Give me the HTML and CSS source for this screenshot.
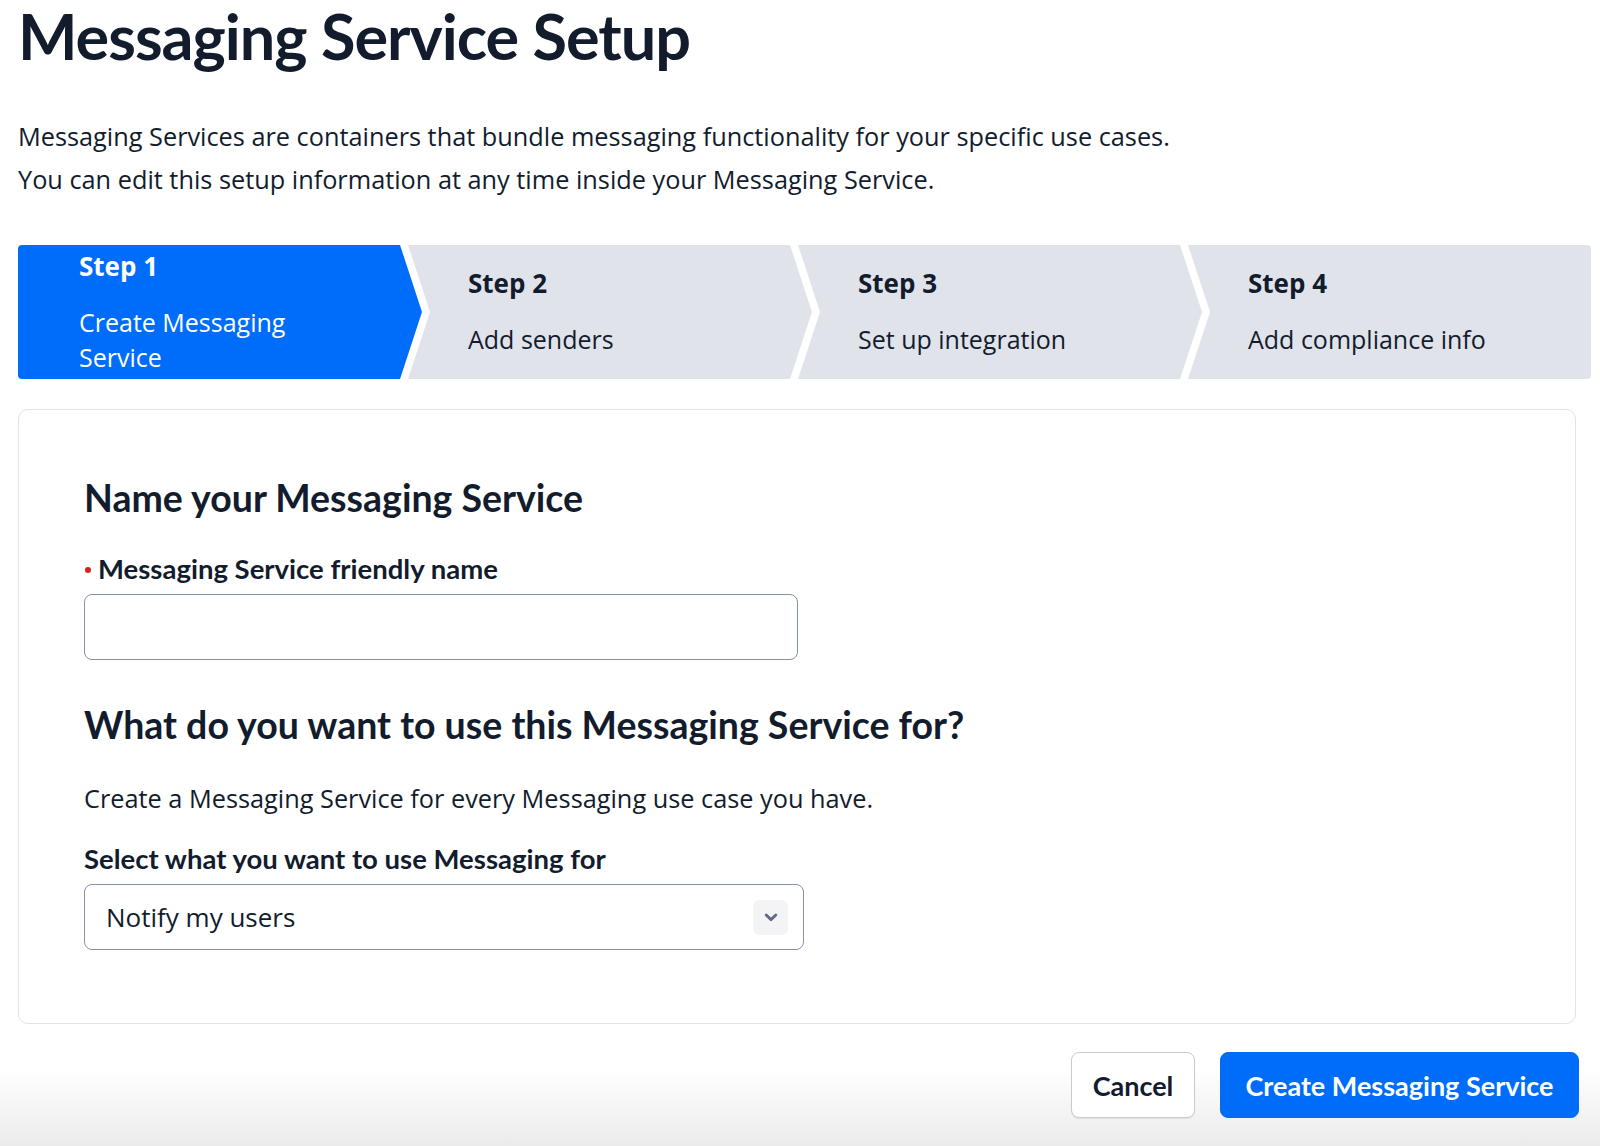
FILE: index.html
```html
<!DOCTYPE html>
<html lang="en">
<head>
<meta charset="utf-8">
<title>Messaging Service Setup</title>
<link rel="stylesheet" href="styles.css">
</head>
<body>
<main class="page">
  <h1 class="page-title">Messaging Service Setup</h1>
  <p class="intro">Messaging Services are containers that bundle messaging functionality for your specific use cases.<br>You can edit this setup information at any time inside your Messaging Service.</p>

  <ol class="stepper">
    <li class="step step-first step-active">
      <span class="step-title">Step 1</span>
      <span class="step-desc">Create Messaging Service</span>
    </li>
    <li class="step">
      <span class="step-title">Step 2</span>
      <span class="step-desc">Add senders</span>
    </li>
    <li class="step">
      <span class="step-title">Step 3</span>
      <span class="step-desc">Set up integration</span>
    </li>
    <li class="step step-last">
      <span class="step-title">Step 4</span>
      <span class="step-desc">Add compliance info</span>
    </li>
  </ol>

  <section class="card">
    <h2 class="card-heading">Name your Messaging Service</h2>
    <label class="field-label" for="friendly-name"><span class="required-dot"></span>Messaging Service friendly name</label>
    <input class="text-input" id="friendly-name" type="text">

    <h2 class="card-heading card-heading-second">What do you want to use this Messaging Service for?</h2>
    <p class="card-desc">Create a Messaging Service for every Messaging use case you have.</p>
    <label class="field-label field-label-select" for="use-case">Select what you want to use Messaging for</label>
    <div class="select" id="use-case">
      <span class="select-value">Notify my users</span>
      <span class="select-chevron">
        <svg width="16" height="16" viewBox="0 0 16 16" aria-hidden="true"><path d="M3.2 6 L8 10.6 L12.8 6" fill="none" stroke="#606b85" stroke-width="2.9" stroke-linecap="round" stroke-linejoin="round"/></svg>
      </span>
    </div>
  </section>

  <div class="actions">
    <button class="btn btn-secondary" type="button">Cancel</button>
    <button class="btn btn-primary" type="button">Create Messaging Service</button>
  </div>
</main>
</body>
</html>
```
FILE: styles.css
```css
html, body {
  margin: 0;
  padding: 0;
}

body {
  height: 1146px;
  overflow: hidden;
  background: linear-gradient(to bottom, #ffffff 0, #ffffff 1068px, #ebebeb 1146px);
  color: #121c2d;
  font-family: "Open Sans", "Liberation Sans", sans-serif;
}

.page {
  padding: 0 9px 0 18px;
}

.page-title {
  margin: 0;
  font-family: "Lato", "Liberation Sans", sans-serif;
  font-weight: 700;
  font-size: 63px;
  line-height: 72px;
  letter-spacing: -1px;
  color: #121c2d;
}

.intro {
  margin: 43px 0 0;
  font-size: 25.3px;
  line-height: 43px;
  color: #121c2d;
}

/* Stepper */
.stepper {
  display: flex;
  height: 134px;
  margin: 44px 0 0;
  padding: 0;
  list-style: none;
}

.step {
  flex: none;
  width: 404px;
  margin-left: -14px;
  box-sizing: border-box;
  padding: 0 82px 0 60px;
  display: flex;
  flex-direction: column;
  justify-content: center;
  background: #e1e3ea;
  color: #121c2d;
  clip-path: polygon(0 0, calc(100% - 22px) 0, 100% 50%, calc(100% - 22px) 100%, 0 100%, 22px 50%);
}

.step-first {
  margin-left: 0;
  padding-left: 61px;
  border-radius: 4px 0 0 4px;
  clip-path: polygon(0 0, calc(100% - 22px) 0, 100% 50%, calc(100% - 22px) 100%, 0 100%);
}

.step-last {
  flex: 1;
  border-radius: 0 4px 4px 0;
  clip-path: polygon(0 0, 100% 0, 100% 100%, 0 100%, 22px 50%);
}

.step-active {
  background: #006dfa;
  color: #ffffff;
}

.step-title {
  font-weight: 700;
  font-size: 26px;
  line-height: 32px;
  margin-bottom: 23px;
}

.step-desc {
  font-size: 25px;
  line-height: 35px;
}

/* Card */
.card {
  margin: 30px 15px 0 0;
  border: 1px solid #e1e3ea;
  border-radius: 10px;
  padding: 68px 65px 73px;
}

.card-heading {
  margin: 0;
  font-family: "Lato", "Liberation Sans", sans-serif;
  font-weight: 700;
  font-size: 37.5px;
  line-height: 40px;
  letter-spacing: 0;
}

.card-heading-second {
  margin-top: 45px;
}

.field-label {
  display: flex;
  align-items: center;
  margin-top: 36px;
  font-family: "Lato", "Liberation Sans", sans-serif;
  font-weight: 700;
  font-size: 27.5px;
  line-height: 30px;
}

.field-label-select {
  margin-top: 31px;
}

.required-dot {
  width: 6px;
  height: 6px;
  border-radius: 50%;
  background: #d61f1f;
  margin: 2px 7px 0 1px;
}

.text-input {
  display: block;
  box-sizing: border-box;
  width: 714px;
  height: 66px;
  margin-top: 10px;
  border: 1px solid #8891aa;
  border-radius: 8px;
  background: #ffffff;
  font: inherit;
}

.card-desc {
  margin: 38px 0 0;
  font-size: 25.3px;
  line-height: 30px;
}

.select {
  box-sizing: border-box;
  width: 720px;
  height: 66px;
  margin-top: 10px;
  border: 1px solid #8891aa;
  border-radius: 8px;
  display: flex;
  align-items: center;
  justify-content: space-between;
  padding: 0 15px 0 21px;
}

.select-value {
  font-size: 26px;
}

.select-chevron {
  width: 35px;
  height: 35px;
  border-radius: 6px;
  background: #f4f4f6;
  display: flex;
  align-items: center;
  justify-content: center;
}

/* Actions */
.actions {
  display: flex;
  justify-content: flex-end;
  gap: 25px;
  margin: 28px 12px 0 0;
}

.btn {
  height: 66px;
  box-sizing: border-box;
  border-radius: 8px;
  font-family: "Lato", "Liberation Sans", sans-serif;
  font-weight: 700;
  font-size: 27px;
  padding: 0 20px;
  cursor: pointer;
}

.btn-secondary {
  width: 124px;
  background: #ffffff;
  color: #121c2d;
  border: 1px solid #c8cbd4;
  box-shadow: 0 1px 1px rgba(18, 28, 45, 0.08);
}

.btn-primary {
  width: 359px;
  background: #006dfa;
  color: #ffffff;
  border: 1px solid #006dfa;
}
```
